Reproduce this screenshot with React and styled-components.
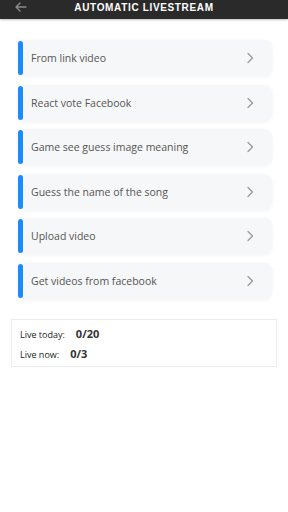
import React from 'react'
import styled, { createGlobalStyle } from 'styled-components'

const Global = createGlobalStyle`
  html, body { margin: 0; padding: 0; background: #fff; }
  body { font-family: "Open Sans", "Liberation Sans", sans-serif; }
`;

const items = [
  'From link video',
  'React vote Facebook',
  'Game see guess image meaning',
  'Guess the name of the song',
  'Upload video',
  'Get videos from facebook',
];

function App() {
  return (
    <Page>
      <Global />
      <Header>
        <Back>
          <svg width="12" height="10" viewBox="0 0 12 10" fill="none" stroke="#8a8a8a" strokeWidth="1.4" strokeLinecap="round" strokeLinejoin="round">
            <path d="M11 5H1.5M5 1L1 5l4 4" />
          </svg>
        </Back>
        <Title>AUTOMATIC LIVESTREAM</Title>
      </Header>
      <List>
        {items.map((t) => (
          <Card key={t}>
            <Bar />
            <Label>{t}</Label>
            <svg width="8" height="12" viewBox="0 0 8 12" fill="none" stroke="#9a9a9a" strokeWidth="1.3" strokeLinecap="round" strokeLinejoin="round">
              <path d="M2 1.5L6.5 6 2 10.5" />
            </svg>
          </Card>
        ))}
      </List>
      <Info>
        <InfoRow>
          <InfoLabel>Live today:</InfoLabel>
          <InfoValue>0/20</InfoValue>
        </InfoRow>
        <InfoRow>
          <InfoLabel>Live now:</InfoLabel>
          <InfoValue>0/3</InfoValue>
        </InfoRow>
      </Info>
    </Page>
  )
}

const Page = styled.div`
  width: 288px;
  height: 512px;
  background: #fff;
`;
const Header = styled.div`
  height: 19px;
  background: #2a2a2a;
  display: flex;
  align-items: center;
  justify-content: center;
  position: relative;
  box-shadow: 0 1px 2px rgba(0,0,0,0.25);
`;
const Back = styled.div`
  position: absolute;
  left: 15px;
  top: 2px;
  display: flex;
`;
const Title = styled.div`
  color: #fff;
  font-family: "Liberation Sans", Arial, sans-serif;
  font-weight: 700;
  font-size: 10px;
  letter-spacing: 0.65px;
  margin-top: -5px;
`;
const List = styled.div`
  display: flex;
  flex-direction: column;
  gap: 8.6px;
  padding: 21px 16px 0 18px;
`;
const Card = styled.div`
  height: 36px;
  background: #f6f7f8;
  border-radius: 8px;
  display: flex;
  align-items: center;
  padding-right: 18px;
  box-shadow: 0 1px 4px rgba(0,0,0,0.05);
`;
const Bar = styled.div`
  width: 5px;
  align-self: stretch;
  margin: 1px 0;
  background: #1a8cff;
  border-radius: 3px;
`;
const Label = styled.div`
  flex: 1;
  margin-left: 8px;
  font-size: 10.5px;
  color: #555;
`;
const Info = styled.div`
  margin: 20px 11px 0 11px;
  border: 1px solid #ececec;
  padding: 6px 8px 4px;
  display: flex;
  flex-direction: column;
  gap: 4px;
`;
const InfoRow = styled.div`
  display: flex;
  align-items: baseline;
  gap: 11px;
  height: 16px;
`;
const InfoLabel = styled.span`
  font-size: 9px;
  color: #222;
`;
const InfoValue = styled.span`
  font-size: 11px;
  font-weight: 700;
  color: #333;
`;

export default App
